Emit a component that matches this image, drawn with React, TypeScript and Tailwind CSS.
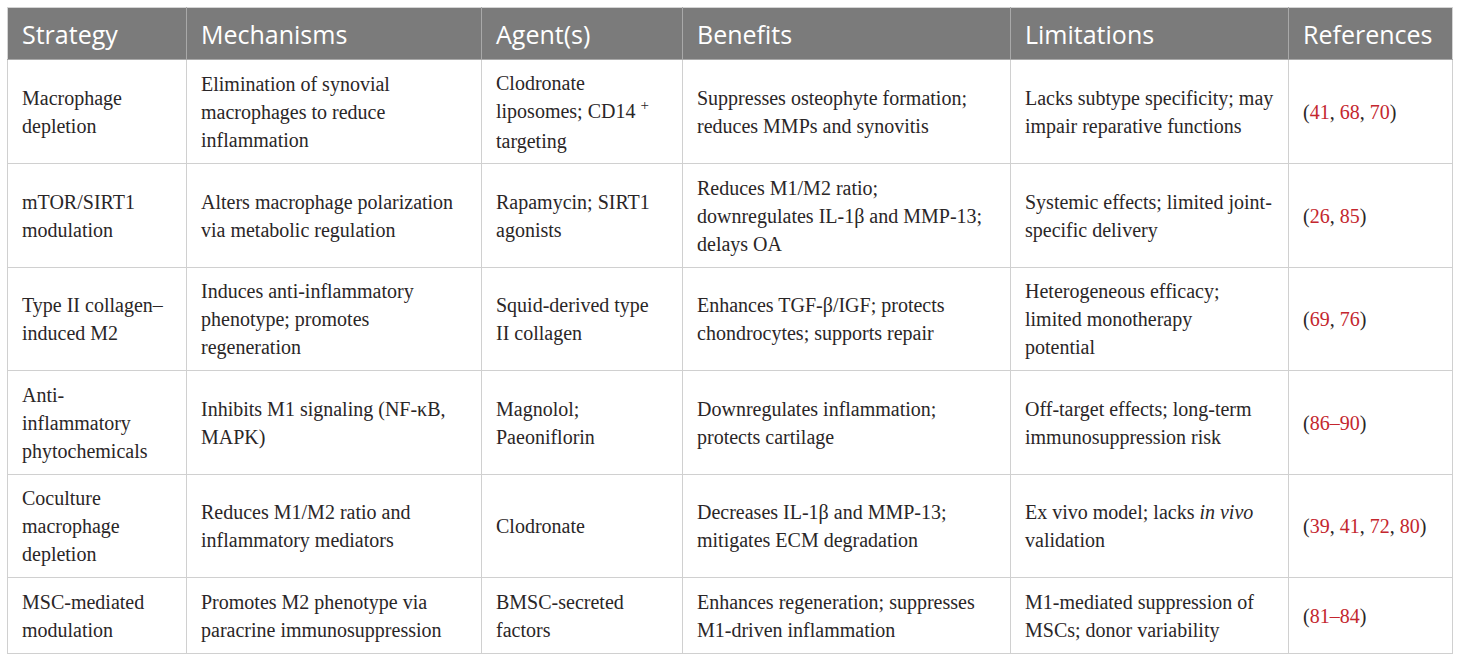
import React from "react";

type Cell = React.ReactNode[];

const R = ({ children }: { children: React.ReactNode }) => (
  <span className="text-[#c4262e]">{children}</span>
);

const rows: Cell[][] = [
  [
    ["Macrophage", "depletion"],
    ["Elimination of synovial", "macrophages to reduce", "inflammation"],
    [
      "Clodronate",
      <>
        liposomes; CD14 <span className="text-[15px] relative top-[-8px]">+</span>
      </>,
      "targeting",
    ],
    ["Suppresses osteophyte formation;", "reduces MMPs and synovitis"],
    ["Lacks subtype specificity; may", "impair reparative functions"],
    [
      <>
        (<R>41</R>, <R>68</R>, <R>70</R>)
      </>,
    ],
  ],
  [
    ["mTOR/SIRT1", "modulation"],
    ["Alters macrophage polarization", "via metabolic regulation"],
    ["Rapamycin; SIRT1", "agonists"],
    ["Reduces M1/M2 ratio;", "downregulates IL-1β and MMP-13;", "delays OA"],
    ["Systemic effects; limited joint-", "specific delivery"],
    [
      <>
        (<R>26</R>, <R>85</R>)
      </>,
    ],
  ],
  [
    ["Type II collagen–", "induced M2"],
    ["Induces anti-inflammatory", "phenotype; promotes", "regeneration"],
    ["Squid-derived type", "II collagen"],
    ["Enhances TGF-β/IGF; protects", "chondrocytes; supports repair"],
    ["Heterogeneous efficacy;", "limited monotherapy", "potential"],
    [
      <>
        (<R>69</R>, <R>76</R>)
      </>,
    ],
  ],
  [
    ["Anti-", "inflammatory", "phytochemicals"],
    ["Inhibits M1 signaling (NF-κB,", "MAPK)"],
    ["Magnolol;", "Paeoniflorin"],
    ["Downregulates inflammation;", "protects cartilage"],
    ["Off-target effects; long-term", "immunosuppression risk"],
    [
      <>
        (<R>86–90</R>)
      </>,
    ],
  ],
  [
    ["Coculture", "macrophage", "depletion"],
    ["Reduces M1/M2 ratio and", "inflammatory mediators"],
    ["Clodronate"],
    ["Decreases IL-1β and MMP-13;", "mitigates ECM degradation"],
    [
      <>
        Ex vivo model; lacks <i>in vivo</i>
      </>,
      "validation",
    ],
    [
      <>
        (<R>39</R>, <R>41</R>, <R>72</R>, <R>80</R>)
      </>,
    ],
  ],
  [
    ["MSC-mediated", "modulation"],
    ["Promotes M2 phenotype via", "paracrine immunosuppression"],
    ["BMSC-secreted", "factors"],
    ["Enhances regeneration; suppresses", "M1-driven inflammation"],
    ["M1-mediated suppression of", "MSCs; donor variability"],
    [
      <>
        (<R>81–84</R>)
      </>,
    ],
  ],
];

const headers = [
  "Strategy",
  "Mechanisms",
  "Agent(s)",
  "Benefits",
  "Limitations",
  "References",
];

const rowHeights = ["h-[104px]", "h-[104px]", "h-[103px]", "h-[104px]", "h-[103px]", "h-[76px]"];

export default function App() {
  return (
    <div className="w-[1460px] h-[661px] bg-white pt-[7px] pl-[7px]">
      <table className="table-fixed border-collapse w-[1445px] font-['Liberation_Serif',serif] text-[20px] leading-[28px] text-[#2a2627]">
        <colgroup>
          <col className="w-[179px]" />
          <col className="w-[295px]" />
          <col className="w-[201px]" />
          <col className="w-[328px]" />
          <col className="w-[278px]" />
          <col className="w-[164px]" />
        </colgroup>
        <thead>
          <tr className="h-[52px] bg-[#7b7b7b]">
            {headers.map((h) => (
              <th
                key={h}
                className="border border-[#a9a9a9] border-t-[#d4d4d4] first:border-l-[#d4d4d4] last:border-r-[#d4d4d4] px-[14px] text-left align-middle font-['Open_Sans',sans-serif] font-normal text-[25px] leading-[34px] text-white whitespace-nowrap"
              >
                {h}
              </th>
            ))}
          </tr>
        </thead>
        <tbody>
          {rows.map((row, ri) => (
            <tr key={ri} className={rowHeights[ri]}>
              {row.map((cell, ci) => (
                <td
                  key={ci}
                  className="border border-[#d0d0d0] px-[14px] py-0 align-middle whitespace-nowrap"
                >
                  {cell.map((line, li) => (
                    <div key={li}>{line}</div>
                  ))}
                </td>
              ))}
            </tr>
          ))}
        </tbody>
      </table>
    </div>
  );
}
